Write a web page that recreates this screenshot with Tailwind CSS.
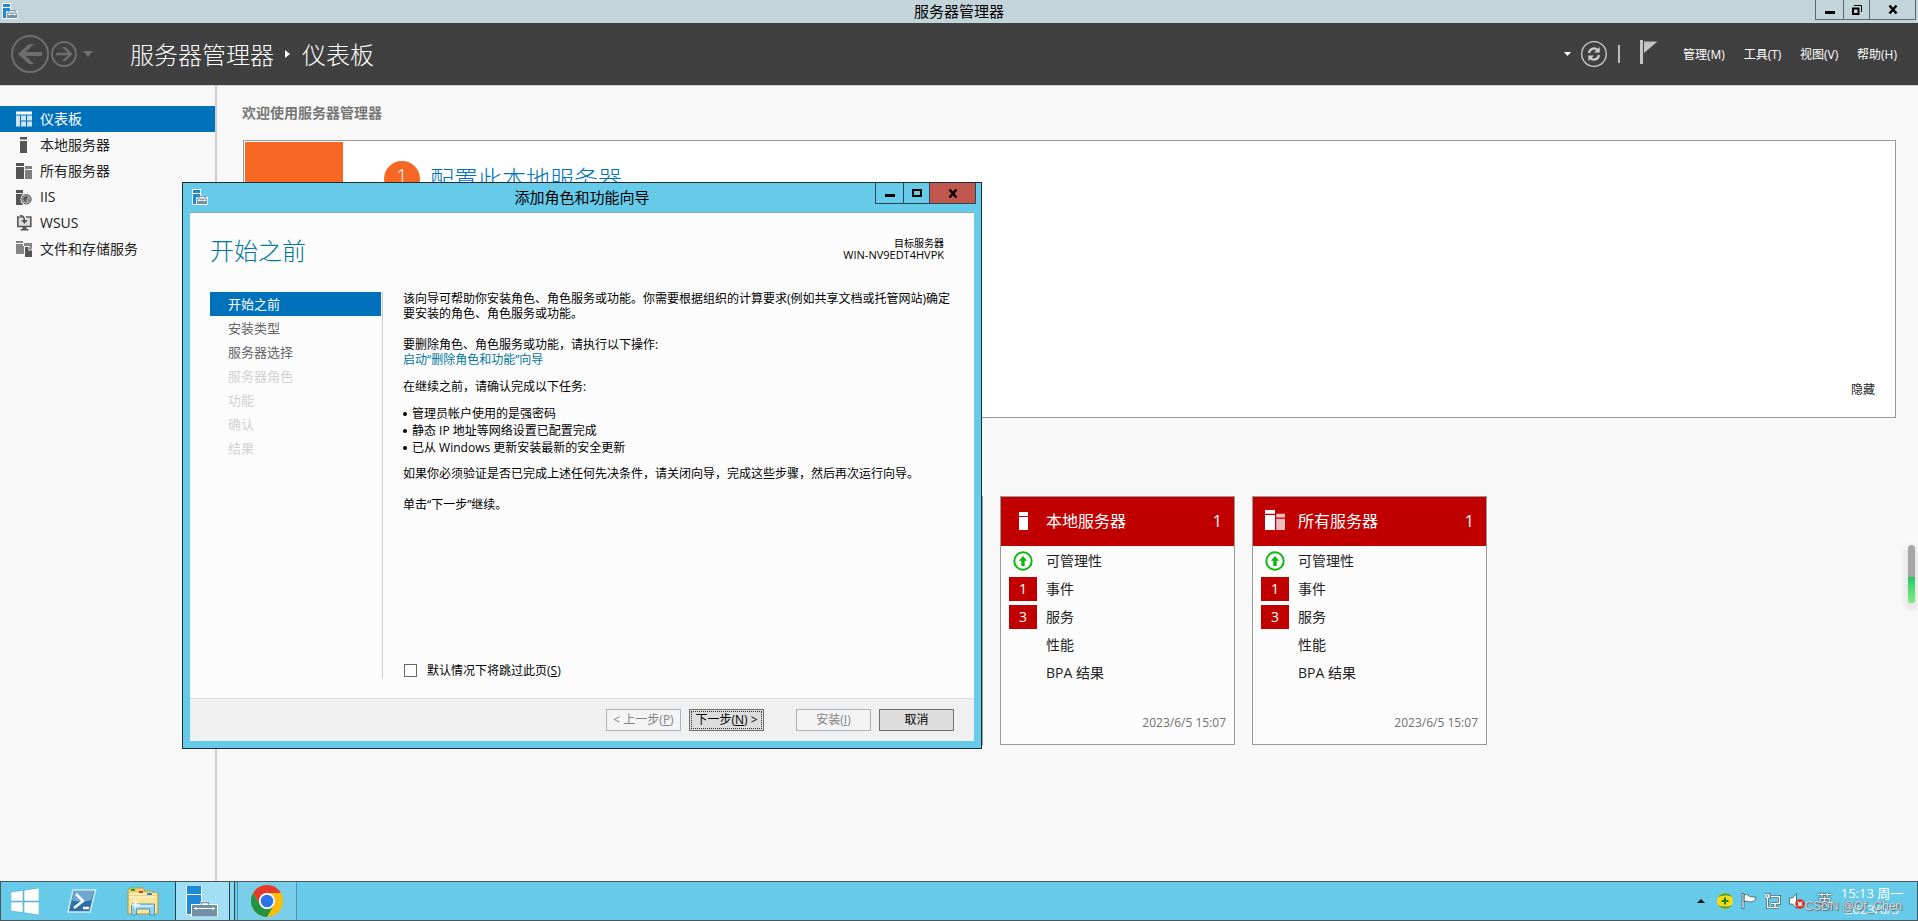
<!DOCTYPE html>
<html lang="zh-CN">
<head>
<meta charset="utf-8">
<title>服务器管理器</title>
<script src="https://cdn.jsdelivr.net/npm/@tailwindcss/browser@4"></script>
</head>
<body class="relative flex min-h-screen flex-col overflow-hidden bg-[#f8f8f8] font-['Open_Sans','Noto_Sans_CJK_SC',sans-serif] text-sm text-[#222]">

<svg class="hidden" aria-hidden="true">
  <defs>
    <symbol id="app" viewBox="0 0 16 16">
      <path d="M0 0h9v6h2.500l-1 2H16v8H0z" fill="#fff"/>
      <path d="M1 1h7v3H1zM1 5h7v3H5L4 9v6H1z" fill="#1e8ad6"/>
      <path d="M4.800 9.500h10.400v5.500H4.800z" fill="#7391a5"/>
      <path d="M6.500 9l1.200-1.700h4.600L13.500 9" fill="none" stroke="#7391a5" stroke-width="1.200"/>
      <path d="M5.500 11.300h9M7.200 10.300v2M12.800 10.300v2" stroke="#fff" stroke-width=".9"/>
    </symbol>
    <symbol id="one" viewBox="0 0 16 16"><path d="M4 0h7v2.500H4zM4 4h7v12H4z" fill="currentColor"/></symbol>
    <symbol id="tower" viewBox="0 0 9 18"><path d="M0 0h9v4H0zM0 5h9v13H0z" fill="currentColor"/></symbol>
    <symbol id="many" viewBox="0 0 16 16"><path d="M0 0h8v3H0zM0 4h8v12H0z" fill="currentColor"/><path d="M9 3h7v3H9zM9 7h7v9H9z" fill="currentColor" opacity=".74"/></symbol>
    <symbol id="up" viewBox="0 0 20 20"><circle cx="10" cy="10" r="8.700" fill="#fff" stroke="#0db80d" stroke-width="2"/><path d="M10 5l4.200 4.700h-2.500V15H8.300V9.700H5.800z" fill="#0db80d"/></symbol>
  </defs>
</svg>

<!-- Window title bar -->
<div class="relative flex h-[23px] items-start justify-between bg-[#c3d5db] pr-0.5 pl-0.5">
  <svg class="mt-[3px] size-4"><use href="#app"/></svg>
  <h1 class="absolute inset-x-0 top-0 text-center text-[15px] leading-[22px] text-black">服务器管理器</h1>
  <div class="relative flex h-5 border border-t-0 border-[#5b6670]">
    <button aria-label="最小化" class="flex w-7 items-center justify-center border-r border-[#5b6670]"><svg class="size-[10px]" viewBox="0 0 10 10"><path d="M0 6h10v3H0z"/></svg></button>
    <button aria-label="还原" class="flex w-[26px] items-center justify-center border-r border-[#5b6670]"><svg class="size-[10px]" viewBox="0 0 10 10"><path d="M1 3.500h5.500V9H1z" fill="none" stroke="#000" stroke-width="2"/><path d="M2 .5h7.500V7" fill="none" stroke="#000"/></svg></button>
    <button aria-label="关闭" class="flex w-[45px] items-center justify-center"><svg class="h-[9px] w-[10px]" viewBox="0 0 10 9"><path d="M1.500 0.500l7 8M8.500 0.500l-7 8" stroke="#000" stroke-width="2.400"/></svg></button>
  </div>
</div>

<!-- Navigation header -->
<header class="flex h-[63px] items-center border-b border-[#d0d0d0] bg-[#404040] text-white">
  <button aria-label="后退" class="ml-[11px]"><svg class="size-[38px]" viewBox="0 0 38 38" fill="none" stroke="#6e6e6e"><circle cx="19" cy="19" r="18" stroke-width="2"/><path d="M31 19H10" stroke-width="4"/><path d="M23 9h-5L7 19l11 10h5L12.500 19z" fill="#6e6e6e" stroke="none"/></svg></button>
  <button aria-label="前进" class="ml-0.5"><svg class="size-[26px]" viewBox="0 0 26 26" fill="none" stroke="#6e6e6e"><circle cx="13" cy="13" r="12" stroke-width="2"/><path d="M5 13h14" stroke-width="2.500"/><path d="M11 6h3.500l7 7-7 7H11l7-7z" fill="#6e6e6e" stroke="none"/></svg></button>
  <button aria-label="历史记录" class="ml-1.5"><svg class="h-1.5 w-[10px]" viewBox="0 0 10 6"><path d="M0 0h10L5 6z" fill="#6e6e6e"/></svg></button>
  <div class="ml-[37px] flex items-center pt-0.5 text-2xl font-light leading-8">
    <span>服务器管理器</span>
    <svg class="mr-3 mb-0.5 ml-[11px] h-2 w-[5px]" viewBox="0 0 5 8"><path d="M0 0l5 4-5 4z" fill="#fff"/></svg>
    <span>仪表板</span>
  </div>
  <div class="ml-auto flex items-center pr-[21px] text-xs">
    <svg class="h-1 w-[7px]" viewBox="0 0 7 4"><path d="M0 0h7L3.500 4z" fill="#fff"/></svg>
    <button aria-label="刷新" class="ml-2.5"><svg class="size-[26px]" viewBox="0 0 26 26" fill="none" stroke="#ccc"><circle cx="13" cy="13" r="12.300" stroke-width="1.300"/><path d="M8 12c.8-5 6.500-6 9-2.500M18 14c-.8 5-6.500 6-9 2.500" stroke-width="2.200"/><path d="M18.700 6v5.500H13zM7.300 20v-5.500H13z" fill="#ccc" stroke="none"/></svg></button>
    <span class="ml-[11px] h-[18px] w-0.5 bg-[#bbb]"></span>
    <button aria-label="通知" class="mb-1 ml-5"><svg class="h-6 w-[18px]" viewBox="0 0 18 24"><path d="M0 0h3v24H0zM4 1.500h13.500L4 13z" fill="#c4c4c4"/></svg></button>
    <nav class="ml-[25px] flex w-[214px] justify-between pt-0.5">
      <button>管理(M)</button><button>工具(T)</button><button>视图(V)</button><button>帮助(H)</button>
    </nav>
  </div>
</header>

<!-- Workspace -->
<div class="flex flex-1">
  <nav class="w-[217px] shrink-0 border-r-2 border-[#ccc] pt-5 leading-[26px]">
    <a href="#" class="flex h-[26px] items-center gap-2 bg-[#0072bc] pl-4 text-white"><svg class="size-4" viewBox="0 0 16 15"><path d="M0 0h16v3H0z" fill="#fff"/><path d="M0 4h4v11H0zM5 4h5v5H5zM11 4h5v5h-5zM5 10h5v5H5zM11 10h5v5h-5z" fill="#cde3f2"/></svg>仪表板</a>
    <a href="#" class="flex h-[26px] items-center gap-2 pl-4"><svg class="size-4 text-[#555]"><use href="#one"/></svg>本地服务器</a>
    <a href="#" class="flex h-[26px] items-center gap-2 pl-4"><svg class="size-4 text-[#555]"><use href="#many"/></svg>所有服务器</a>
    <a href="#" class="flex h-[26px] items-center gap-2 pl-4"><svg class="size-4" viewBox="0 0 16 16"><path d="M0 1h7v3H0zM0 5h7v11H0z" fill="#555"/><circle cx="10.500" cy="10.300" r="6" fill="#f8f8f8"/><circle cx="10.500" cy="10.300" r="4.700" fill="#aaa" stroke="#555"/><path d="M8 8l3-1 1 2-2 2 1 2-2 0-2-3zM12.500 10l1.500 1-1.500 2z" fill="#555"/></svg>IIS</a>
    <a href="#" class="flex h-[26px] items-center gap-2 pl-4"><svg class="size-4" viewBox="0 0 16 16"><path d="M1.800 2h13v9.500h-13z" fill="#ddd" stroke="#555" stroke-width="1.600"/><path d="M6.500 12h4v2h2v1.500h-8V14h2z" fill="#555"/><path d="M3 0c3-.5 5.500 1 5.500 5" fill="none" stroke="#f8f8f8" stroke-width="4"/><path d="M4 1c3-.3 4.500 1.500 4.500 5" fill="none" stroke="#555" stroke-width="1.800"/><path d="M5.200 5h6.600L8.500 9z" fill="#555"/></svg>WSUS</a>
    <a href="#" class="flex h-[26px] items-center gap-2 pl-4"><svg class="size-4" viewBox="0 0 16 16"><path d="M0 0h7v2H0zM0 3h7v10H0zM8 2h8v4H8z" fill="#858585"/><path d="M7 5h9v3.500H9V13H7z" fill="#858585"/><path d="M8 5h5l3 3v8H8z" fill="#f8f8f8"/><path d="M9 6h3.500v3.500H16V16H9z" fill="#555"/><path d="M13.500 6L16 8.500h-2.500z" fill="#555"/></svg>文件和存储服务</a>
  </nav>

  <main class="min-w-0 flex-1 pt-4 pr-[22px] pl-[26px]">
    <h2 class="-ml-px leading-[22px] font-bold text-[#777]">欢迎使用服务器管理器</h2>
    <section class="mt-4 flex h-[278px] border border-[#999] bg-white p-px">
      <div class="h-[120px] w-[98px] bg-[#f56723]"></div>
      <div class="flex flex-1 items-start pt-[19px] pl-[41px]">
        <span class="flex size-9 items-center justify-center rounded-full bg-[#f56723] pb-1 text-xl font-light text-white">1</span>
        <a href="#" class="ml-2.5 text-2xl font-light leading-9 text-[#0072bc]">配置此本地服务器</a>
      </div>
      <button class="mr-[19px] mb-4 self-end text-xs leading-5">隐藏</button>
    </section>

    <section class="mt-[78px] ml-px flex gap-[17px]">
      <div class="h-[249px] w-[235px] border border-[#999] bg-[#fcfcfc]"></div>
      <div class="h-[249px] w-[235px] border border-[#999] bg-[#fcfcfc]"></div>
      <div class="h-[249px] w-[235px] border border-[#999] bg-[#fcfcfc]"></div>
      <article class="flex h-[249px] w-[235px] flex-col border border-[#999] bg-[#fcfcfc]">
        <h3 class="flex h-[49px] items-center bg-[#c00000] pr-3 pb-px text-base text-white"><svg class="mr-[5px] ml-[18px] h-[18px] w-[9px]"><use href="#tower"/></svg><span class="ml-[13px] flex-1">本地服务器</span><span>1</span></h3>
        <ul class="pt-px pl-2">
          <li class="flex h-7 items-center gap-[9px]"><span class="flex w-7 justify-center"><svg class="size-5"><use href="#up"/></svg></span>可管理性</li>
          <li class="flex h-7 items-center gap-[9px]"><span class="h-6 w-7 bg-[#c00000] text-center leading-6 text-white">1</span>事件</li>
          <li class="flex h-7 items-center gap-[9px]"><span class="h-6 w-7 bg-[#c00000] text-center leading-6 text-white">3</span>服务</li>
          <li class="flex h-7 items-center pl-[37px]">性能</li>
          <li class="flex h-7 items-center pl-[37px]">BPA 结果</li>
        </ul>
        <time class="mt-auto mr-2 mb-[11px] self-end text-xs leading-5 text-[#707070]">2023/6/5 15:07</time>
      </article>
      <article class="flex h-[249px] w-[235px] flex-col border border-[#999] bg-[#fcfcfc]">
        <h3 class="flex h-[49px] items-center bg-[#c00000] pr-3 pb-px text-base text-white"><svg class="mb-0.5 ml-3 size-5"><use href="#many"/></svg><span class="ml-[13px] flex-1">所有服务器</span><span>1</span></h3>
        <ul class="pt-px pl-2">
          <li class="flex h-7 items-center gap-[9px]"><span class="flex w-7 justify-center"><svg class="size-5"><use href="#up"/></svg></span>可管理性</li>
          <li class="flex h-7 items-center gap-[9px]"><span class="h-6 w-7 bg-[#c00000] text-center leading-6 text-white">1</span>事件</li>
          <li class="flex h-7 items-center gap-[9px]"><span class="h-6 w-7 bg-[#c00000] text-center leading-6 text-white">3</span>服务</li>
          <li class="flex h-7 items-center pl-[37px]">性能</li>
          <li class="flex h-7 items-center pl-[37px]">BPA 结果</li>
        </ul>
        <time class="mt-auto mr-2 mb-[11px] self-end text-xs leading-5 text-[#707070]">2023/6/5 15:07</time>
      </article>
    </section>
  </main>
</div>

<!-- Floating meter -->
<div class="absolute top-[545px] right-[3px] flex h-[58px] w-[7px] flex-col overflow-hidden rounded-full bg-[#a6a6a6] shadow-[0_4px_6px_3px_rgba(0,0,0,0.08)]">
  <div class="mt-auto h-[26px] bg-linear-to-b from-[#17c964] to-[#7cf083]"></div>
</div>

<!-- Add roles wizard -->
<div role="dialog" aria-labelledby="wizard-title" class="absolute top-[182px] left-[182px] flex h-[567px] w-[800px] flex-col border border-[#222b30] bg-[#66cae9] px-[7px] pb-[7px] text-black">
  <div class="relative flex h-[29px] items-start justify-between">
    <svg class="mt-[6px] ml-0.5 size-4"><use href="#app"/></svg>
    <h2 id="wizard-title" class="absolute inset-x-0 top-0.5 text-center text-[15px] leading-6">添加角色和功能向导</h2>
    <div class="relative -mr-0.5 flex h-[21px] border border-t-0 border-[#2d4550]">
      <button aria-label="最小化" class="flex w-7 items-center justify-center border-r border-[#2d4550]"><svg class="size-[10px]" viewBox="0 0 10 10"><path d="M0 6h10v3H0z"/></svg></button>
      <button aria-label="最大化" class="flex w-[26px] items-center justify-center border-r border-[#2d4550]"><svg class="h-2 w-[10px]" viewBox="0 0 10 8"><path d="M1 1h8v6H1z" fill="none" stroke="#000" stroke-width="2"/></svg></button>
      <button aria-label="关闭" class="flex w-[45px] items-center justify-center bg-[#c1584f]"><svg class="h-[9px] w-[10px]" viewBox="0 0 10 9"><path d="M1.500 0.500l7 8M8.500 0.500l-7 8" stroke="#000" stroke-width="2.400"/></svg></button>
    </div>
  </div>
  <div class="flex flex-1 flex-col border-t border-[#86aabf] bg-[#fcfcfc]">
    <div class="flex items-start justify-between pt-5 pr-[30px] pl-5">
      <h3 class="text-2xl leading-9 font-light text-[#00769b]">开始之前</h3>
      <p class="pt-1 text-right text-[10px] leading-3">目标服务器<br><span class="text-[11px]">WIN-NV9EDT4HVPK</span></p>
    </div>
    <div class="mt-[23px] flex flex-1 pl-5">
      <ul class="w-[173px] border-r border-[#ccc] pr-px text-[13px] leading-6 text-[#666]">
        <li class="bg-[#0072bc] pl-[18px] text-white">开始之前</li>
        <li class="pl-[18px]">安装类型</li>
        <li class="pl-[18px]">服务器选择</li>
        <li class="pl-[18px] text-[#d2d2d2]">服务器角色</li>
        <li class="pl-[18px] text-[#d2d2d2]">功能</li>
        <li class="pl-[18px] text-[#d2d2d2]">确认</li>
        <li class="pl-[18px] text-[#d2d2d2]">结果</li>
      </ul>
      <div class="-mt-px flex flex-1 flex-col pr-[18px] pl-5 text-xs leading-[15px]">
        <p>该向导可帮助你安装角色、角色服务或功能。你需要根据组织的计算要求(例如共享文档或托管网站)确定要安装的角色、角色服务或功能。</p>
        <p class="mt-4">要删除角色、角色服务或功能，请执行以下操作:<br><a href="#" class="text-[#00769b]">启动“删除角色和功能”向导</a></p>
        <p class="mt-3">在继续之前，请确认完成以下任务:</p>
        <ul class="mt-[11px] leading-[17px]">
          <li class="flex items-center gap-[5px]"><span class="size-1 rounded-full bg-black"></span>管理员帐户使用的是强密码</li>
          <li class="flex items-center gap-[5px]"><span class="size-1 rounded-full bg-black"></span>静态 IP 地址等网络设置已配置完成</li>
          <li class="flex items-center gap-[5px]"><span class="size-1 rounded-full bg-black"></span>已从 Windows 更新安装最新的安全更新</li>
        </ul>
        <p class="mt-2.5">如果你必须验证是否已完成上述任何先决条件，请关闭向导，完成这些步骤，然后再次运行向导。</p>
        <p class="mt-4">单击“下一步”继续。</p>
        <label class="mt-auto flex items-center gap-2.5 pl-px"><input type="checkbox" class="size-[13px] appearance-none border border-[#666] bg-white"><span>默认情况下将跳过此页(<u>S</u>)</span></label>
      </div>
    </div>
    <div class="mt-5 flex h-[43px] items-center justify-end border-t border-[#dcdcdc] bg-[#f0f0f0] pr-5 text-xs">
      <button disabled class="h-[22px] w-[75px] border border-[#adb2b5] bg-[#f4f4f4] text-[#838383]">&lt; 上一步(<u>P</u>)</button>
      <button class="ml-2 h-[22px] w-[75px] border border-[#707070] bg-[#ddd] p-px whitespace-nowrap"><span class="flex h-full items-center justify-center border border-dotted border-[#333]"><span>下一步(<u>N</u>) &gt;</span></span></button>
      <button disabled class="ml-8 h-[22px] w-[75px] border border-[#adb2b5] bg-[#f4f4f4] text-[#838383]">安装(<u>I</u>)</button>
      <button class="ml-2 h-[22px] w-[75px] border border-[#707070] bg-[#ddd]">取消</button>
    </div>
  </div>
</div>

<!-- Taskbar -->
<footer class="flex h-10 items-stretch border border-[#4a5459] bg-[#66cae9] text-white">
  <button aria-label="开始" class="ml-2.5 flex items-center"><svg class="h-[27px] w-7" viewBox="0 0 28 27"><path d="M0 4l12-1.600V13H0zM13 2.200L28 0v13H13zM0 14h12v10.500L0 23zM13 14h15v13l-15-2.200z" fill="#fff" stroke="#4aa0bd" stroke-width=".5"/></svg></button>
  <button aria-label="PowerShell" class="ml-[26px] flex items-center"><svg class="h-6 w-8" viewBox="0 0 32 24"><path d="M8 1h22.500L25 23H3z" fill="#2b6fa8" stroke="#d4ecf6" stroke-width="1.500"/><path d="M9 2h20l-2.500 9C20 13 12 13 6.500 11z" fill="#6fa7cf"/><path d="M11 5l7 7-9 7M18 19h6" fill="none" stroke="#fff" stroke-width="2.500"/></svg></button>
  <button aria-label="文件资源管理器" class="ml-[30px] flex items-center"><svg class="h-[29px] w-8" viewBox="0 0 32 29"><path d="M1 3l3-2h13v3h9v2h5v21H1z" fill="#ecd27a" stroke="#b99843"/><path d="M2 7h28M2 10h28" stroke="#fff6cf" stroke-width="1.500"/><path d="M2 11h28v15H2z" fill="#f8e49b"/><path d="M4 2h4v2H4z" fill="#12a812"/><path d="M12 4h4v2h-4z" fill="#d43b22"/><path d="M20 6h5v2h-5z" fill="#1e8ad6"/><path d="M4.500 28V17h23v11h-5v-6h-13v6z" fill="#8fd0ee" stroke="#5298bd"/><path d="M6 19h20" stroke="#dff5ff" stroke-width="1.500"/><path d="M8.500 12v11M4 17.500h9M5.500 14.500l6 6M11.500 14.500l-6 6" stroke="#fff" stroke-width=".8"/></svg></button>
  <div class="ml-4 flex w-[60px] border border-y-0 border-[#27414c] bg-[#8cd7f0]">
    <button aria-label="服务器管理器" class="flex w-[54px] items-center border-r border-[#27414c] bg-[#a0dff4] pl-2.5"><svg class="h-[31px] w-8" viewBox="0 0 32 31"><path d="M0 0h16v29H0z" fill="#fff"/><path d="M1 0h14v8H1zM1 9h14v19H1z" fill="#1e8ad6"/><path d="M5 18h9l1-3h7l1 3h9v13H5z" fill="#fff"/><path d="M6 19h25v11.500H6z" fill="#7391a5"/><path d="M15 18.500l1-2h6l1 2" fill="none" stroke="#7391a5" stroke-width="1.500"/><path d="M8 22.500h21M10 21v3M27 21v3" stroke="#fff"/></svg></button>
  </div>
  <button aria-label="Chrome" class="ml-0.5 flex w-[60px] items-center justify-center border border-y-0 border-[#4d93ab] bg-[#79cfea]"><svg class="size-8" viewBox="0 0 32 32"><circle cx="16" cy="16" r="16" fill="#f9bb0c"/><path d="M2.140 8A16 16 0 0 1 29.860 8H16a8 8 0 0 0-6.930 12z" fill="#e33b2e"/><path d="M2.140 8A16 16 0 0 0 16 32l6.930-12A8 8 0 0 1 9.070 20z" fill="#229342"/><circle cx="16" cy="16" r="8" fill="#fff"/><circle cx="16" cy="16" r="6.300" fill="#2b74e8"/></svg></button>
  <div class="relative ml-auto flex items-center pr-[13px]">
    <button aria-label="显示隐藏的图标"><svg class="h-1 w-2" viewBox="0 0 8 4"><path d="M0 4h8L4 0z" fill="#111"/></svg></button>
    <svg class="ml-3 size-4" viewBox="0 0 16 16"><circle cx="8" cy="8" r="8" fill="#ffd81a"/><path d="M1 4c4-5 11-5 14 0-4-2-9-2-14 0zM1 12c4 5 11 5 14 0-4 2-9 2-14 0z" fill="#4aa52e"/><path d="M8 4.500v7M4.500 8h7" stroke="#178a1c" stroke-width="2"/></svg>
    <svg class="ml-2 size-4" viewBox="0 0 16 16"><path d="M1 .5h2v15H1zM3 2c3-1 4 0 5 1s4 1 7 1c-1 3-2 5-5 5S6 7 3 9z" fill="#fff" stroke="#3a5a68" stroke-width=".8"/></svg>
    <svg class="ml-2 size-4" viewBox="0 0 16 16"><g fill="none" stroke="#3a5a68" stroke-width="3"><path d="M6 3.500h8.500v7H6M10 11v3M6 14.500h8M2.500 5v9.500H5M1 1.500h3v3H1z"/></g><g fill="none" stroke="#fff" stroke-width="1.400"><path d="M6 3.500h8.500v7H6M10 11v3M6 14.500h8M2.500 5v9.500H5M1 1.500h3v3H1z"/></g></svg>
    <svg class="ml-2 size-4" viewBox="0 0 16 16"><path d="M.5 5h3l4-4.500v15L3.500 11h-3z" fill="#fff" stroke="#3a5a68" stroke-width=".8"/><circle cx="11" cy="11" r="4.800" fill="#d8322a"/><path d="M9 9l4 4M13 9l-4 4" stroke="#fff" stroke-width="1.500"/></svg>
    <span class="ml-3 text-[15px] [text-shadow:0_0_2px_#123,0_0_1px_#123]">英</span>
    <time class="ml-2 w-[64px] text-center text-[13px] leading-4 whitespace-nowrap">15:13 周一<br>2023/6/5</time>
    <span class="absolute right-[15px] bottom-1.5 font-['Liberation_Sans',sans-serif] text-xs leading-4 whitespace-nowrap text-[#d5dde1] [text-shadow:1px_1px_1px_#5a6a72,0_0_1px_#5a6a72]">CSDN @Of_Chen</span>
  </div>
</footer>
</body>
</html>
